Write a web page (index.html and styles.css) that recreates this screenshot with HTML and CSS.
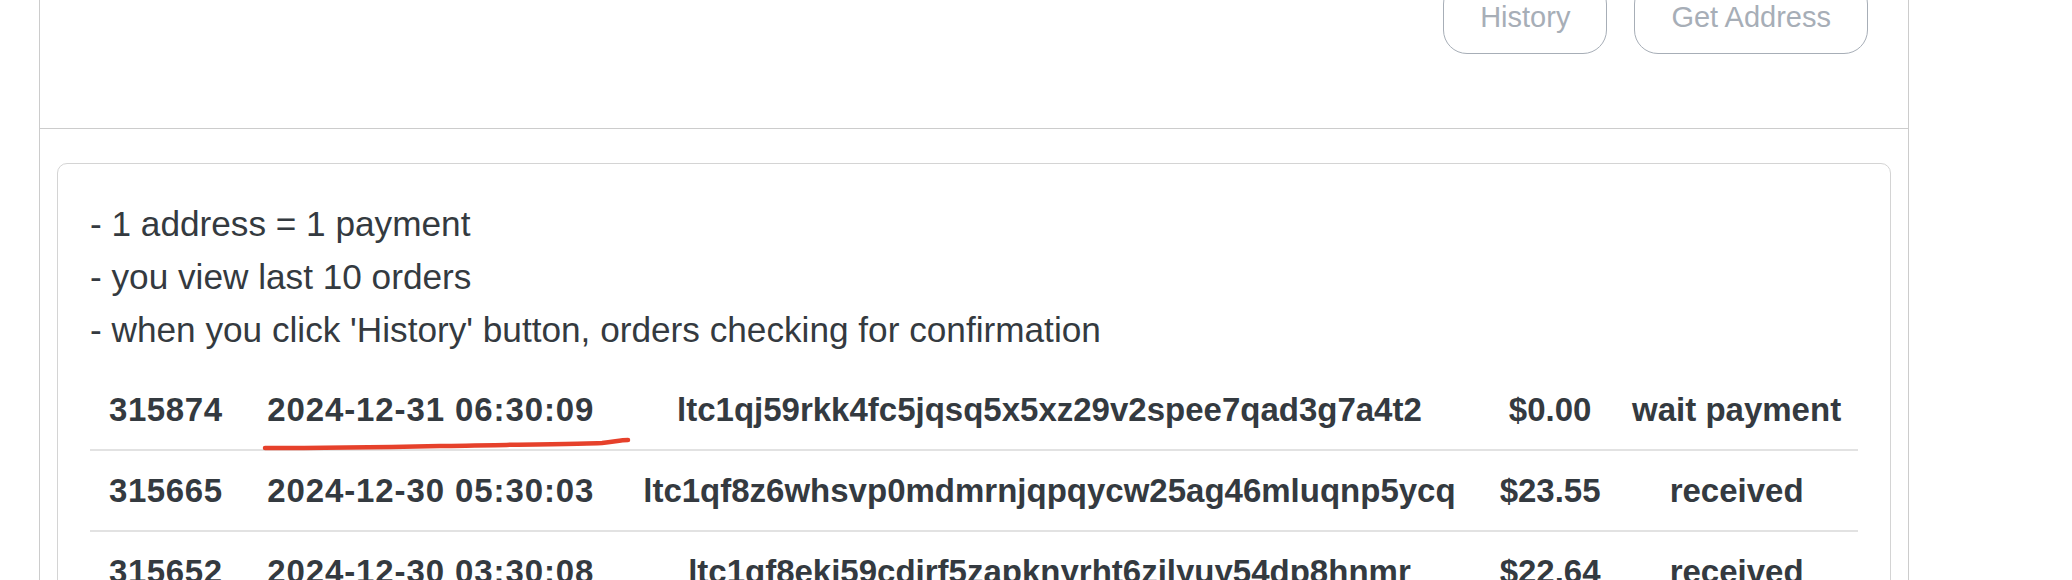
FILE: index.html
```html
<!DOCTYPE html>
<html lang="en">

<head>
    <meta charset="UTF-8">
    <meta name="viewport" content="width=device-width, initial-scale=1.0">
    <title>Orders</title>
    <link rel="stylesheet" href="styles.css">
</head>

<body>

    <div class="panel">
        <div class="panel-head">
            <button class="btn">History</button>
            <button class="btn">Get Address</button>
        </div>
        <div class="panel-body">
            <div class="card">
                <p class="notes">
                    - 1 address = 1 payment<br>
                    - you view last 10 orders<br>
                    - when you click 'History' button, orders checking for confirmation
                </p>
                <table class="orders">
                    <tbody>
                        <tr>
                            <td class="num">315874</td>
                            <td class="date">2024-12-31 06:30:09</td>
                            <td>ltc1qj59rkk4fc5jqsq5x5xz29v2spee7qad3g7a4t2</td>
                            <td>$0.00</td>
                            <td>wait payment</td>
                        </tr>
                        <tr>
                            <td class="num">315665</td>
                            <td class="date">2024-12-30 05:30:03</td>
                            <td>ltc1qf8z6whsvp0mdmrnjqpqycw25ag46mluqnp5ycq</td>
                            <td>$23.55</td>
                            <td>received</td>
                        </tr>
                        <tr>
                            <td class="num">315652</td>
                            <td class="date">2024-12-30 03:30:08</td>
                            <td>ltc1qf8ekj59cdjrf5zapknyrht6zjlyuy54dp8hnmr</td>
                            <td>$22.64</td>
                            <td>received</td>
                        </tr>
                    </tbody>
                </table>
            </div>
        </div>
    </div>

    <!-- hand drawn mark from the screenshot -->
    <svg class="mark" width="2072" height="580" viewBox="0 0 2072 580">
        <path d="M265 448 C 330 448, 390 447, 440 446 S 580 444, 602 443 C 614 442, 620 440, 628 440"
            fill="none" stroke="#e6412b" stroke-width="4.5" stroke-linecap="round" />
    </svg>

</body>

</html>
```

FILE: styles.css
```css
body {
    font-family: "Liberation Sans", Arial, sans-serif;
    margin: 0;
    padding: 0;
    background-color: #fff;
    color: #343a40;
    overflow: hidden;
}

.panel {
    width: 1868px;
    margin: -40px 0 0 39px;
    border-left: 1px solid #cccccc;
    border-right: 1px solid #cccccc;
}

.panel-head {
    display: flex;
    justify-content: flex-end;
    gap: 27px;
    padding: 20px 40px 74px;
    border-bottom: 1px solid #cccccc;
}

.btn {
    font-family: "Liberation Sans", Arial, sans-serif;
    font-size: 29px;
    line-height: 44px;
    padding: 14px 36px;
    color: #a7aeb7;
    background: #fff;
    border: 1px solid #a7aeb7;
    border-radius: 24px;
}

.panel-body {
    padding: 34px 17px;
}

.card {
    border: 1px solid #d4d4d4;
    border-radius: 10px;
    padding: 34px 32px;
}

.notes {
    font-size: 35.2px;
    line-height: 52.8px;
    margin: 0 0 14px;
}

.orders {
    width: 100%;
    border-collapse: collapse;
}

.orders td {
    font-size: 33px;
    font-weight: bold;
    line-height: 52.8px;
    padding: 14px 12px 12px;
    text-align: center;
    white-space: nowrap;
    border-bottom: 2px solid #e2e2e2;
}

.orders .num {
    letter-spacing: 0.6px;
    padding-left: 16px;
}

.orders .date {
    letter-spacing: 0.9px;
    padding-left: 22px;
}

.mark {
    position: absolute;
    left: 0;
    top: 0;
    pointer-events: none;
}
```
